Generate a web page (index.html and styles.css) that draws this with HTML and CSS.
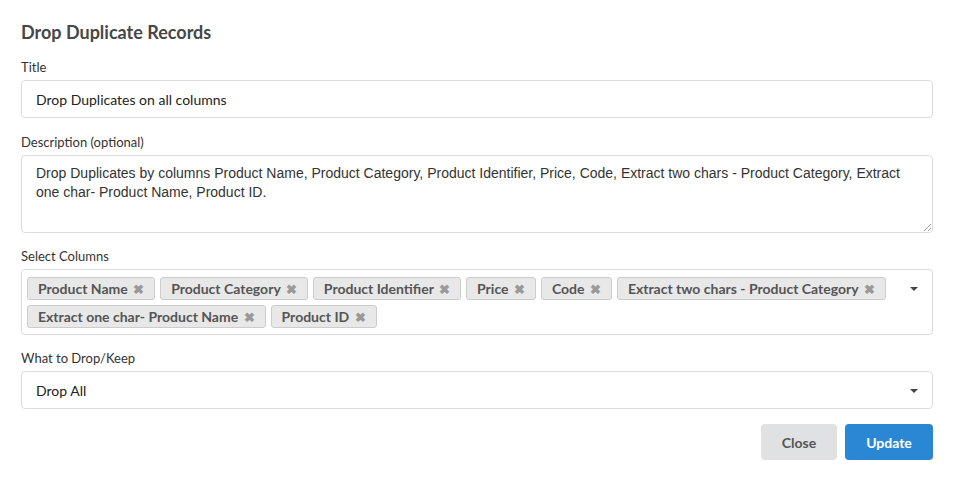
FILE: index.html
```html
<!DOCTYPE html>
<html>
<head>
  <title>Drop Duplicate Records</title>
  <link rel="stylesheet" href="styles.css">
</head>
<body>
  <div class="modal">
    <h2 class="modal-title">Drop Duplicate Records</h2>

    <div class="field title-field">
      <label>Title</label>
      <div class="input">Drop Duplicates on all columns</div>
    </div>

    <div class="field">
      <label>Description (optional)</label>
      <div class="textarea">Drop Duplicates by columns Product Name, Product Category, Product Identifier, Price, Code, Extract two chars - Product Category, Extract one char- Product Name, Product ID.<span class="grip"></span></div>
    </div>

    <div class="field">
      <label>Select Columns</label>
      <div class="multi">
        <div class="tags">
          <span class="tag">Product Name <i>&#10006;</i></span>
          <span class="tag">Product Category <i>&#10006;</i></span>
          <span class="tag">Product Identifier <i>&#10006;</i></span>
          <span class="tag">Price <i>&#10006;</i></span>
          <span class="tag">Code <i>&#10006;</i></span>
          <span class="tag">Extract two chars - Product Category <i>&#10006;</i></span>
          <span class="tag">Extract one char- Product Name <i>&#10006;</i></span>
          <span class="tag">Product ID <i>&#10006;</i></span>
        </div>
        <span class="caret"></span>
      </div>
    </div>

    <div class="field">
      <label>What to Drop/Keep</label>
      <div class="input select">Drop All <span class="caret"></span></div>
    </div>

    <div class="actions">
      <button class="btn grey">Close</button>
      <button class="btn blue">Update</button>
    </div>
  </div>
</body>
</html>
```

FILE: styles.css
```css
body {
  margin: 0;
  font-family: Lato, "Open Sans", sans-serif;
  color: #333;
  background: #fff;
}

.modal {
  width: 912px;
  padding: 19px 21px 17px;
}

.modal-title {
  margin: 0 0 14px;
  font-size: 18px;
  font-weight: bold;
  color: #474747;
  line-height: 26px;
}

.field {
  margin-bottom: 15px;
}

.field.title-field {
  margin-bottom: 16px;
}

.field label {
  display: block;
  font-size: 13px;
  line-height: 16px;
  color: #333;
  margin-bottom: 5px;
}

.input {
  height: 34px;
  border: 1px solid #ddd;
  border-radius: 4px;
  padding: 2px 14px 0;
  font-size: 14px;
  line-height: 34px;
  color: #222;
}

.textarea {
  position: relative;
  height: 62px;
  border: 1px solid #ddd;
  border-radius: 4px;
  padding: 8px 14px 6px;
  font-family: "Liberation Sans", Arial, sans-serif;
  font-size: 14px;
  line-height: 19px;
  color: #333;
}

.grip {
  position: absolute;
  right: 1px;
  bottom: 1px;
  width: 7px;
  height: 7px;
  background: linear-gradient(135deg, transparent 45%, #999 45%, #999 55%, transparent 55%, transparent 75%, #999 75%, #999 85%, transparent 85%);
}

.multi {
  display: flex;
  align-items: flex-start;
  border: 1px solid #ddd;
  border-radius: 4px;
  padding: 7px 14px 6px 5px;
  min-height: 51px;
}

.tags {
  flex: 1;
  display: flex;
  flex-wrap: wrap;
  gap: 5px 5px;
}

.tag {
  display: inline-block;
  height: 21px;
  line-height: 21px;
  padding: 0 10px;
  background: #e8e8e8;
  border: 1px solid #ccc;
  border-radius: 3px;
  font-size: 14px;
  font-weight: bold;
  color: #555;
}

.tag i {
  font-style: normal;
  font-size: 13px;
  color: #999;
  margin-left: 2px;
}

.caret {
  width: 0;
  height: 0;
  border-left: 4px solid transparent;
  border-right: 4px solid transparent;
  border-top: 4px solid #444;
  margin-top: 10px;
}

.select {
  display: flex;
  align-items: center;
  justify-content: space-between;
}

.select .caret {
  margin-top: 0;
  margin-right: 0;
}

.actions {
  display: flex;
  justify-content: flex-end;
  gap: 8px;
  margin-top: 14px;
}

.btn {
  height: 36px;
  border: none;
  border-radius: 4px;
  font-family: Lato, sans-serif;
  font-size: 14px;
  font-weight: bold;
  cursor: pointer;
}

.btn.grey {
  width: 76px;
  background: #e0e1e2;
  color: #555;
}

.btn.blue {
  width: 88px;
  background: #2a87d3;
  color: #fff;
}
```
